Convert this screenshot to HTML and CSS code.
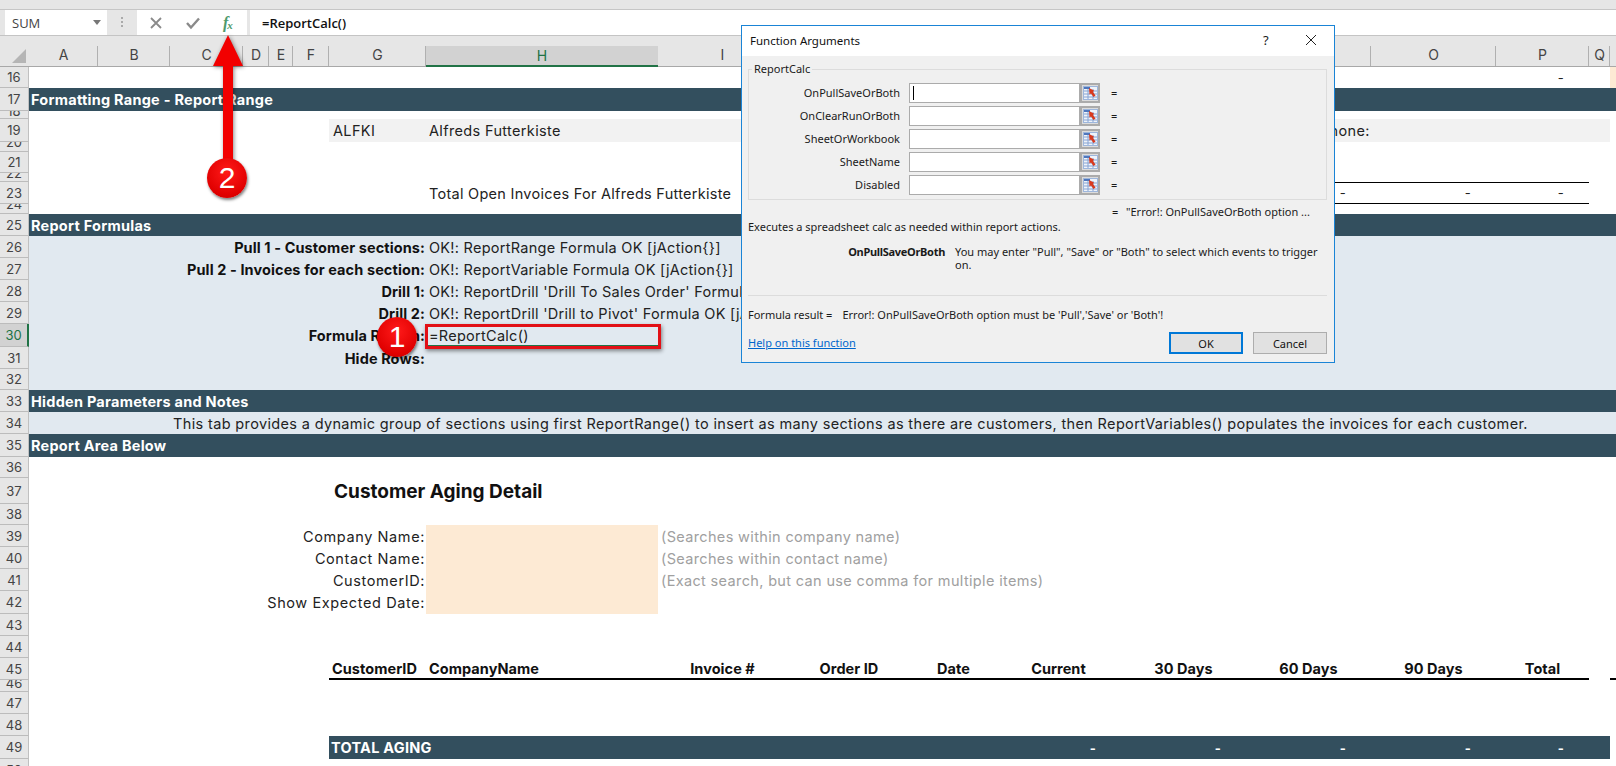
FILE: index.html
```html
<!DOCTYPE html>
<html lang="en">
<head>
<meta charset="utf-8">
<title>Function Arguments - ReportCalc</title>
<link rel="stylesheet" href="styles.css">
</head>
<body>
<div class="app">
  <div class="topstrip"></div>
  <div class="fbar">
    <div class="namebox"><span>SUM</span><i class="caret"></i></div>
    <div class="dots"></div>
    <div class="fbtns">
      <svg class="ficon" width="14" height="14" viewBox="0 0 14 14"><path d="M2 2L12 12M12 2L2 12" stroke="#8a8a8a" stroke-width="1.8" fill="none"/></svg>
      <svg class="ficon" width="16" height="14" viewBox="0 0 16 14"><path d="M2 7L6 11.5L14 2.5" stroke="#8a8a8a" stroke-width="2.4" fill="none"/></svg>
      <span class="fx">f<sub>x</sub></span>
    </div>
    <div class="formula">=ReportCalc()</div>
  </div>

  <div class="row colhead">
    <div class="corner"><i></i></div>
    <div class="ch">A</div><div class="ch">B</div><div class="ch">C</div><div class="ch">D</div><div class="ch">E</div><div class="ch">F</div><div class="ch">G</div><div class="ch sel">H</div><div class="ch">I</div><div class="ch">J</div><div class="ch">K</div><div class="ch">L</div><div class="ch">M</div><div class="ch">N</div><div class="ch">O</div><div class="ch">P</div><div class="ch">Q</div><div class="ch last"></div>
  </div>

  <div class="row h21"><div class="rh">16</div><div class="cell c-p dash">-</div><div class="cell c-r peach"></div></div>
  <div class="row h23"><div class="rh">17</div><div class="cell band to-end">Formatting Range - Report Range</div></div>
  <div class="row h8"><div class="rh top"><span class="clip">18</span></div></div>
  <div class="row h23"><div class="rh">19</div><div class="cell c-g-q grey"><span class="alf1">ALFKI</span><span class="alf2">Alfreds Futterkiste</span><span class="phone">Phone:</span></div></div>
  <div class="row h10"><div class="rh top"><span class="clip">20</span></div></div>
  <div class="row h21"><div class="rh">21</div></div>
  <div class="row h9"><div class="rh top"><span class="clip">22</span></div></div>
  <div class="row h22"><div class="rh">23</div><div class="cell c-h txt">Total Open Invoices For Alfreds Futterkiste</div><div class="cell c-n dash rule">-</div><div class="cell c-o dash rule">-</div><div class="cell c-p dash rule">-</div></div>
  <div class="row h10"><div class="rh top"><span class="clip">24</span></div></div>
  <div class="row h22"><div class="rh">25</div><div class="cell band to-end">Report Formulas</div></div>
  <div class="row h22"><div class="rh">26</div><div class="cell lbl blue-l b">Pull 1 - Customer sections:</div><div class="cell c-h-end blue txt">OK!: ReportRange Formula OK [jAction{}]</div></div>
  <div class="row h22"><div class="rh">27</div><div class="cell lbl blue-l b">Pull 2 - Invoices for each section:</div><div class="cell c-h-end blue txt">OK!: ReportVariable Formula OK [jAction{}]</div></div>
  <div class="row h22"><div class="rh">28</div><div class="cell lbl blue-l b">Drill 1:</div><div class="cell c-h-end blue txt">OK!: ReportDrill 'Drill To Sales Order' Formula OK [jAction{}]</div></div>
  <div class="row h22"><div class="rh">29</div><div class="cell lbl blue-l b">Drill 2:</div><div class="cell c-h-end blue txt">OK!: ReportDrill 'Drill to Pivot' Formula OK [jAction{}]</div></div>
  <div class="row h23"><div class="rh on">30</div><div class="cell lbl blue-l b">Formula Region:</div><div class="cell c-h blue-sel txt">=ReportCalc()</div><div class="cell c-i-end blue"></div></div>
  <div class="row h22"><div class="rh">31</div><div class="cell lbl blue-l b">Hide Rows:</div><div class="cell c-h-end blue"></div></div>
  <div class="row h21"><div class="rh">32</div><div class="cell to-end blue"></div></div>
  <div class="row h22"><div class="rh">33</div><div class="cell band to-end">Hidden Parameters and Notes</div></div>
  <div class="row h22"><div class="rh">34</div><div class="cell to-end blue note">This tab provides a dynamic group of sections using first ReportRange() to insert as many sections as there are customers, then ReportVariables() populates the invoices for each customer.</div></div>
  <div class="row h23"><div class="rh">35</div><div class="cell band to-end">Report Area Below</div></div>
  <div class="row h21"><div class="rh">36</div></div>
  <div class="row h26"><div class="rh">37</div><div class="cell c-g-q title">Customer Aging Detail</div></div>
  <div class="row h21"><div class="rh">38</div></div>
  <div class="row h22"><div class="rh">39</div><div class="cell lbl">Company Name:</div><div class="cell c-h peach"></div><div class="cell c-i-end hint">(Searches within company name)</div></div>
  <div class="row h22"><div class="rh">40</div><div class="cell lbl">Contact Name:</div><div class="cell c-h peach"></div><div class="cell c-i-end hint">(Searches within contact name)</div></div>
  <div class="row h22"><div class="rh">41</div><div class="cell lbl">CustomerID:</div><div class="cell c-h peach"></div><div class="cell c-i-end hint">(Exact search, but can use comma for multiple items)</div></div>
  <div class="row h23"><div class="rh">42</div><div class="cell lbl">Show Expected Date:</div><div class="cell c-h peach"></div></div>
  <div class="row h22"><div class="rh">43</div></div>
  <div class="row h22"><div class="rh">44</div></div>
  <div class="row h22 thead"><div class="rh">45</div>
    <div class="cell c-g th left">CustomerID</div><div class="cell c-h th left">CompanyName</div><div class="cell c-i th">Invoice #</div><div class="cell c-j th">Order ID</div><div class="cell c-k th">Date</div><div class="cell c-l th">Current</div><div class="cell c-m th">30 Days</div><div class="cell c-n th">60 Days</div><div class="cell c-o th">90 Days</div><div class="cell c-p th">Total</div><div class="cell c-s th"></div>
  </div>
  <div class="row h12"><div class="rh top"><span class="clip late">46</span></div></div>
  <div class="row h22"><div class="rh">47</div></div>
  <div class="row h22"><div class="rh">48</div></div>
  <div class="row h23"><div class="rh">49</div>
    <div class="cell c-g-k band">TOTAL AGING</div><div class="cell c-l band dash">-</div><div class="cell c-m band dash">-</div><div class="cell c-n band dash">-</div><div class="cell c-o band dash">-</div><div class="cell c-p band dash">-</div><div class="cell c-q band"></div>
  </div>
  <div class="row h22"><div class="rh">50</div></div>
</div>

<div class="redbox"></div>
<svg class="arrow" width="50" height="135" viewBox="0 0 50 135"><path d="M25 1L40 32H30V132H20V32H10Z" fill="#f20000"/></svg>
<div class="badge b1">1</div>
<div class="badge b2">2</div>

<div class="dialog">
  <div class="dtitle"><span class="dname">Function Arguments</span><span class="dq">?</span>
    <svg class="dx" width="12" height="12" viewBox="0 0 12 12"><path d="M1 1L11 11M11 1L1 11" stroke="#222" stroke-width="1" fill="none"/></svg>
  </div>
  <div class="dbody">
    <div class="group">
      <span class="legend">ReportCalc</span>
      <div class="arow"><label>OnPullSaveOrBoth</label><div class="input"><i class="cursor"></i></div><div class="refbtn"><svg width="15" height="14" viewBox="0 0 15 14"><use href="#ref"/></svg></div><b class="eq">=</b></div>
      <div class="arow"><label>OnClearRunOrBoth</label><div class="input"></div><div class="refbtn"><svg width="15" height="14" viewBox="0 0 15 14"><use href="#ref"/></svg></div><b class="eq">=</b></div>
      <div class="arow"><label>SheetOrWorkbook</label><div class="input"></div><div class="refbtn"><svg width="15" height="14" viewBox="0 0 15 14"><use href="#ref"/></svg></div><b class="eq">=</b></div>
      <div class="arow"><label>SheetName</label><div class="input"></div><div class="refbtn"><svg width="15" height="14" viewBox="0 0 15 14"><use href="#ref"/></svg></div><b class="eq">=</b></div>
      <div class="arow"><label>Disabled</label><div class="input"></div><div class="refbtn"><svg width="15" height="14" viewBox="0 0 15 14"><use href="#ref"/></svg></div><b class="eq">=</b></div>
    </div>
    <div class="result"><b class="eq">=</b><span>"Error!: OnPullSaveOrBoth option ...</span></div>
    <div class="desc">Executes a spreadsheet calc as needed within report actions.</div>
    <div class="argdesc"><strong>OnPullSaveOrBoth</strong><span>You may enter "Pull", "Save" or "Both" to select which events to trigger<br>on.</span></div>
    <div class="sep"></div>
    <div class="fres"><span>Formula result =</span><span>Error!: OnPullSaveOrBoth option must be 'Pull','Save' or 'Both'!</span></div>
    <div class="dfoot"><a class="help" href="#">Help on this function</a><button class="btn ok">OK</button><button class="btn">Cancel</button></div>
  </div>
</div>

<svg class="defs" width="0" height="0">
  <symbol id="ref" viewBox="0 0 15 14">
    <rect x="0.5" y="0.5" width="14" height="13" fill="#eef3fa" stroke="#9db6dc"/>
    <rect x="1" y="1" width="6" height="2" fill="#4f77bd"/>
    <path d="M1 5H14M1 8H14M1 11H14M5 3V13M10 3V13" stroke="#86a3d3" fill="none"/>
    <path d="M6 2L11 4.5L10 6L12.5 9.5L10.5 11L8 7.5L6.5 8.5Z" fill="#d83a1f"/>
  </symbol>
</svg>
</body>
</html>
```

FILE: styles.css
```css
* { box-sizing: border-box; }
html, body { margin: 0; height: 766px; overflow: hidden; background: #fff; }
body { font-family: Inter, "Liberation Sans", sans-serif; font-size: 13px; color: #1a1a1a; position: relative; }
.app { display: flex; flex-direction: column; height: 766px; overflow: hidden; }

.topstrip { height: 9px; background: #e6e6e6; flex: none; }
.fbar { height: 26px; flex: none; display: flex; background: #e6e6e6; border-top: 1px solid #c6c6c6; font-family: "Open Sans", sans-serif; }
.namebox { width: 102px; margin-left: 5px; background: #fff; display: flex; align-items: center; justify-content: space-between; padding: 0 5px 0 7px; font-size: 13px; color: #444; }
.caret { width: 0; height: 0; border: 4px solid transparent; border-top: 5px solid #777; border-bottom: 0; margin-right: 1px; }
.dots { width: 30px; position: relative; }
.dots::before { content: ""; position: absolute; left: 14px; top: 7px; width: 2px; height: 10px; background: repeating-linear-gradient(#aaa 0 2px, transparent 2px 4px); }
.fbtns { width: 110px; background: #fff; display: flex; align-items: center; gap: 22px; padding-left: 12px; }
.fx { font-family: "Liberation Serif", serif; font-style: italic; font-weight: bold; color: #4e9a6c; font-size: 16px; line-height: 1; margin-left: 0; }
.fx sub { font-size: 11px; vertical-align: -1px; margin-left: -1px; }
.formula { flex: 1; margin-left: 3px; background: #fff; display: flex; align-items: center; padding-left: 12px; font-size: 13px; font-weight: 600; color: #111; }

.row { flex: none; display: grid; grid-template-columns: 29px 69px 72px 73px 26px 24px 36px 97px 232px 129px 124px 85px 125px 125px 125px 125px 93px 21px 6px; }
.h8 { height: 8px; } .h9 { height: 9px; } .h10 { height: 10px; } .h12 { height: 12px; }
.h21 { height: 21px; } .h22 { height: 22px; } .h23 { height: 23px; } .h26 { height: 26px; }

.colhead { height: 32px; border-top: 1px solid #c4c4c4; border-bottom: 1px solid #a8a8a8; background: #e6e6e6; }
.corner { position: relative; }
.corner i { position: absolute; right: 3px; bottom: 3px; width: 0; height: 0; border-style: solid; border-width: 0 0 14px 14px; border-color: transparent transparent #b5b5b5 transparent; }
.ch { display: flex; align-items: center; justify-content: center; font-size: 14px; color: #444; position: relative; padding-top: 6px; }
.ch::after { content: ""; position: absolute; right: 0; bottom: 0; top: 10px; width: 1px; background: #b0b0b0; }
.ch.sel { background: #d2d2d2; color: #217346; border-bottom: 2px solid #217346; margin-bottom: -1px; margin-top: 10px; padding-top: 0; }
.ch.sel::after, .ch.last::after { display: none; }

.rh { grid-column: 1; background: #e6e6e6; border-bottom: 1px solid #bcbcbc; border-right: 1px solid #c0c0c0; display: flex; align-items: center; justify-content: center; font-size: 13px; color: #444; overflow: hidden; min-height: 0; }
.rh.top { align-items: flex-start; }
.rh .clip { line-height: 16px; margin-top: -8px; flex: none; }
.rh .clip.late { margin-top: -5px; }
.rh.on { background: #d2d2d2; color: #217346; border-right: 2px solid #217346; }

.cell { display: flex; align-items: center; white-space: nowrap; min-width: 0; overflow: visible; font-size: 14.5px; color: #222; letter-spacing: 0.35px; }
.band { background: #334f5e; color: #fff; font-weight: 700; padding-left: 2px; letter-spacing: 0.25px; }
.to-end { grid-column: 2 / -1; }
.lbl { grid-column: 2 / 9; justify-content: flex-end; padding-right: 1px; letter-spacing: 0.6px; }
.lbl.b { font-weight: 700; color: #111; letter-spacing: 0.1px; }
.blue, .blue-l, .blue-sel { background: #e1e9f0; }
.blue-sel { box-shadow: inset 0 -2px 0 #217346; }
.txt { padding-left: 3px; letter-spacing: 0.27px; }
.c-g { grid-column: 8; } .c-h { grid-column: 9; } .c-i { grid-column: 10; } .c-j { grid-column: 11; } .c-k { grid-column: 12; } .c-l { grid-column: 13; } .c-m { grid-column: 14; } .c-n { grid-column: 15; } .c-o { grid-column: 16; } .c-p { grid-column: 17; } .c-q { grid-column: 18; } .c-r { grid-column: 19; } .c-s { grid-column: 19; }
.c-g-q { grid-column: 8 / 19; }
.c-g-k { grid-column: 8 / 13; }
.c-h-end { grid-column: 9 / -1; }
.c-i-end { grid-column: 10 / -1; }
.peach { background: #fdead4; }
.grey { background: #f2f2f2; }
.alf1 { width: 97px; padding-left: 4px; flex: none; }
.alf2 { padding-left: 3px; flex: none; width: 894px; }
.phone { flex: none; }
.dash { justify-content: flex-end; padding-right: 25px; padding-left: 0; font-size: 13px; }
.rule { border-top: 1px solid #000; border-bottom: 1px solid #000; }
.note { justify-content: center; padding-left: 56px; }
.title { font-size: 19px; font-weight: 700; color: #111; padding-left: 5px; letter-spacing: 0; }
.hint { color: #a0a0a0; padding-left: 3px; }
.th { justify-content: center; font-weight: 700; color: #111; border-bottom: 2px solid #000; letter-spacing: 0.05px; }
.th.left { justify-content: flex-start; padding-left: 3px; }

.redbox { position: absolute; left: 425px; top: 324px; width: 236px; height: 25px; border: 3px solid #e21016; box-shadow: 1px 2px 4px rgba(0,0,0,.45); }
.arrow { position: absolute; left: 203px; top: 34px; filter: drop-shadow(1px 1px 2px rgba(0,0,0,.45)); }
.badge { position: absolute; width: 40px; height: 40px; border-radius: 50%; background: radial-gradient(circle at 50% 35%, #ff1a1a, #e00000 70%, #c00000); box-shadow: 1px 2px 3px rgba(0,0,0,.5); color: #fff; font-family: "Liberation Sans", sans-serif; font-size: 30px; display: flex; align-items: center; justify-content: center; }
.b1 { left: 377px; top: 317px; }
.b2 { left: 207px; top: 158px; }

.dialog { position: absolute; left: 741px; top: 25px; width: 594px; height: 338px; border: 1px solid #1a84d6; background: #f0f0f0; font-family: "Noto Sans", sans-serif; font-size: 11px; color: #1a1a1a; display: flex; flex-direction: column; }
.dtitle { height: 30px; flex: none; background: #fff; display: flex; align-items: center; padding-left: 8px; padding-bottom: 2px; position: relative; }
.dname { font-size: 11.5px; color: #111; }
.dq { position: absolute; left: 521px; top: 5px; font-size: 13px; }
.dx { position: absolute; left: 563px; top: 8px; }
.dbody { flex: 1; padding: 0 7px 0 6px; display: flex; flex-direction: column; }
.group { position: relative; margin-top: 13px; height: 131px; border: 1px solid #dcdcdc; padding-top: 13px; display: flex; flex-direction: column; gap: 3px; }
.legend { position: absolute; left: 3px; top: -9px; background: #f0f0f0; padding: 0 2px; line-height: 15px; }
.arow { height: 20px; display: flex; align-items: center; }
.arow label { width: 151px; text-align: right; position: relative; top: -1px; }
.input { width: 171px; height: 20px; margin-left: 9px; background: #fff; border: 1px solid #ababab; position: relative; }
.cursor { position: absolute; left: 3px; top: 2px; width: 1px; height: 14px; background: #000; }
.refbtn { width: 20px; height: 20px; background: #dcdcdc; border: 2px solid #ababab; display: flex; align-items: center; justify-content: center; }
.eq { font-weight: 400; margin-left: 11px; position: relative; top: -1px; }
.result { height: 14px; margin-top: 5px; padding-left: 364px; display: flex; align-items: center; line-height: 14px; white-space: nowrap; }
.result .eq { margin-left: 0; width: 14px; top: 0; }
.desc { margin-top: 1px; height: 14px; line-height: 14px; white-space: nowrap; }
.argdesc { margin-top: 11px; height: 50px; display: flex; line-height: 13px; }
.argdesc strong { width: 197px; text-align: right; font-weight: 700; letter-spacing: -0.3px; }
.argdesc span { margin-left: 10px; white-space: nowrap; }
.sep { height: 1px; background: #dcdcdc; flex: none; }
.fres { margin-top: 12px; height: 14px; line-height: 14px; display: flex; gap: 10px; white-space: nowrap; }
.dfoot { margin-top: 10px; height: 22px; display: flex; align-items: center; gap: 10px; }
.help { color: #0066cc; margin-right: auto; position: relative; top: -1px; }
.btn { width: 74px; height: 22px; font: inherit; color: #111; background: #e1e1e1; border: 1px solid #adadad; padding: 0; }
.btn.ok { border: 2px solid #0078d7; }
.defs { position: absolute; }
```
